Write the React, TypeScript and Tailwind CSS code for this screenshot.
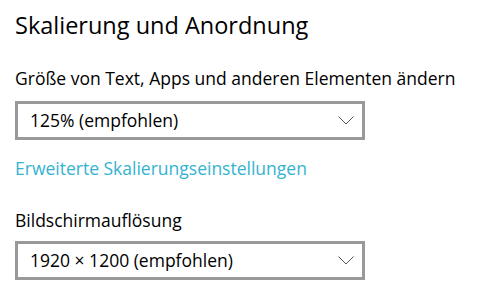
import React from 'react';

const ChevronDown = () => (
  <svg width="16" height="9" viewBox="0 0 16 9" fill="none" className="shrink-0">
    <path d="M0.5 0.5 L8 8 L15.5 0.5" stroke="#555" strokeWidth="1" />
  </svg>
);

const Select: React.FC<{ value: string }> = ({ value }) => (
  <div className="flex h-[39px] w-[350px] items-center justify-between border-[3px] border-[#999999] bg-white pl-[12px] pr-[8px]">
    <span className="text-[17.5px] leading-none text-black">{value}</span>
    <ChevronDown />
  </div>
);

export default function App() {
  return (
    <div
      className="h-[291px] w-[483px] bg-white pl-[15px] pt-[9px] text-black"
      style={{ fontFamily: '"Open Sans", "Noto Sans", sans-serif' }}
    >
      <h1 className="text-[23.5px] leading-[32px]">Skalierung und Anordnung</h1>
      <p className="mt-[25px] text-[17.5px] leading-[24px]">Größe von Text, Apps und anderen Elementen ändern</p>
      <div className="mt-[11px]">
        <Select value="125% (empfohlen)" />
      </div>
      <a className="mt-[16px] block text-[17.5px] leading-[24px] text-[#34b3cf]">Erweiterte Skalierungseinstellungen</a>
      <p className="mt-[28px] text-[17.5px] leading-[24px]">Bildschirmauflösung</p>
      <div className="mt-[9px]">
        <Select value="1920 × 1200 (empfohlen)" />
      </div>
    </div>
  );
}
